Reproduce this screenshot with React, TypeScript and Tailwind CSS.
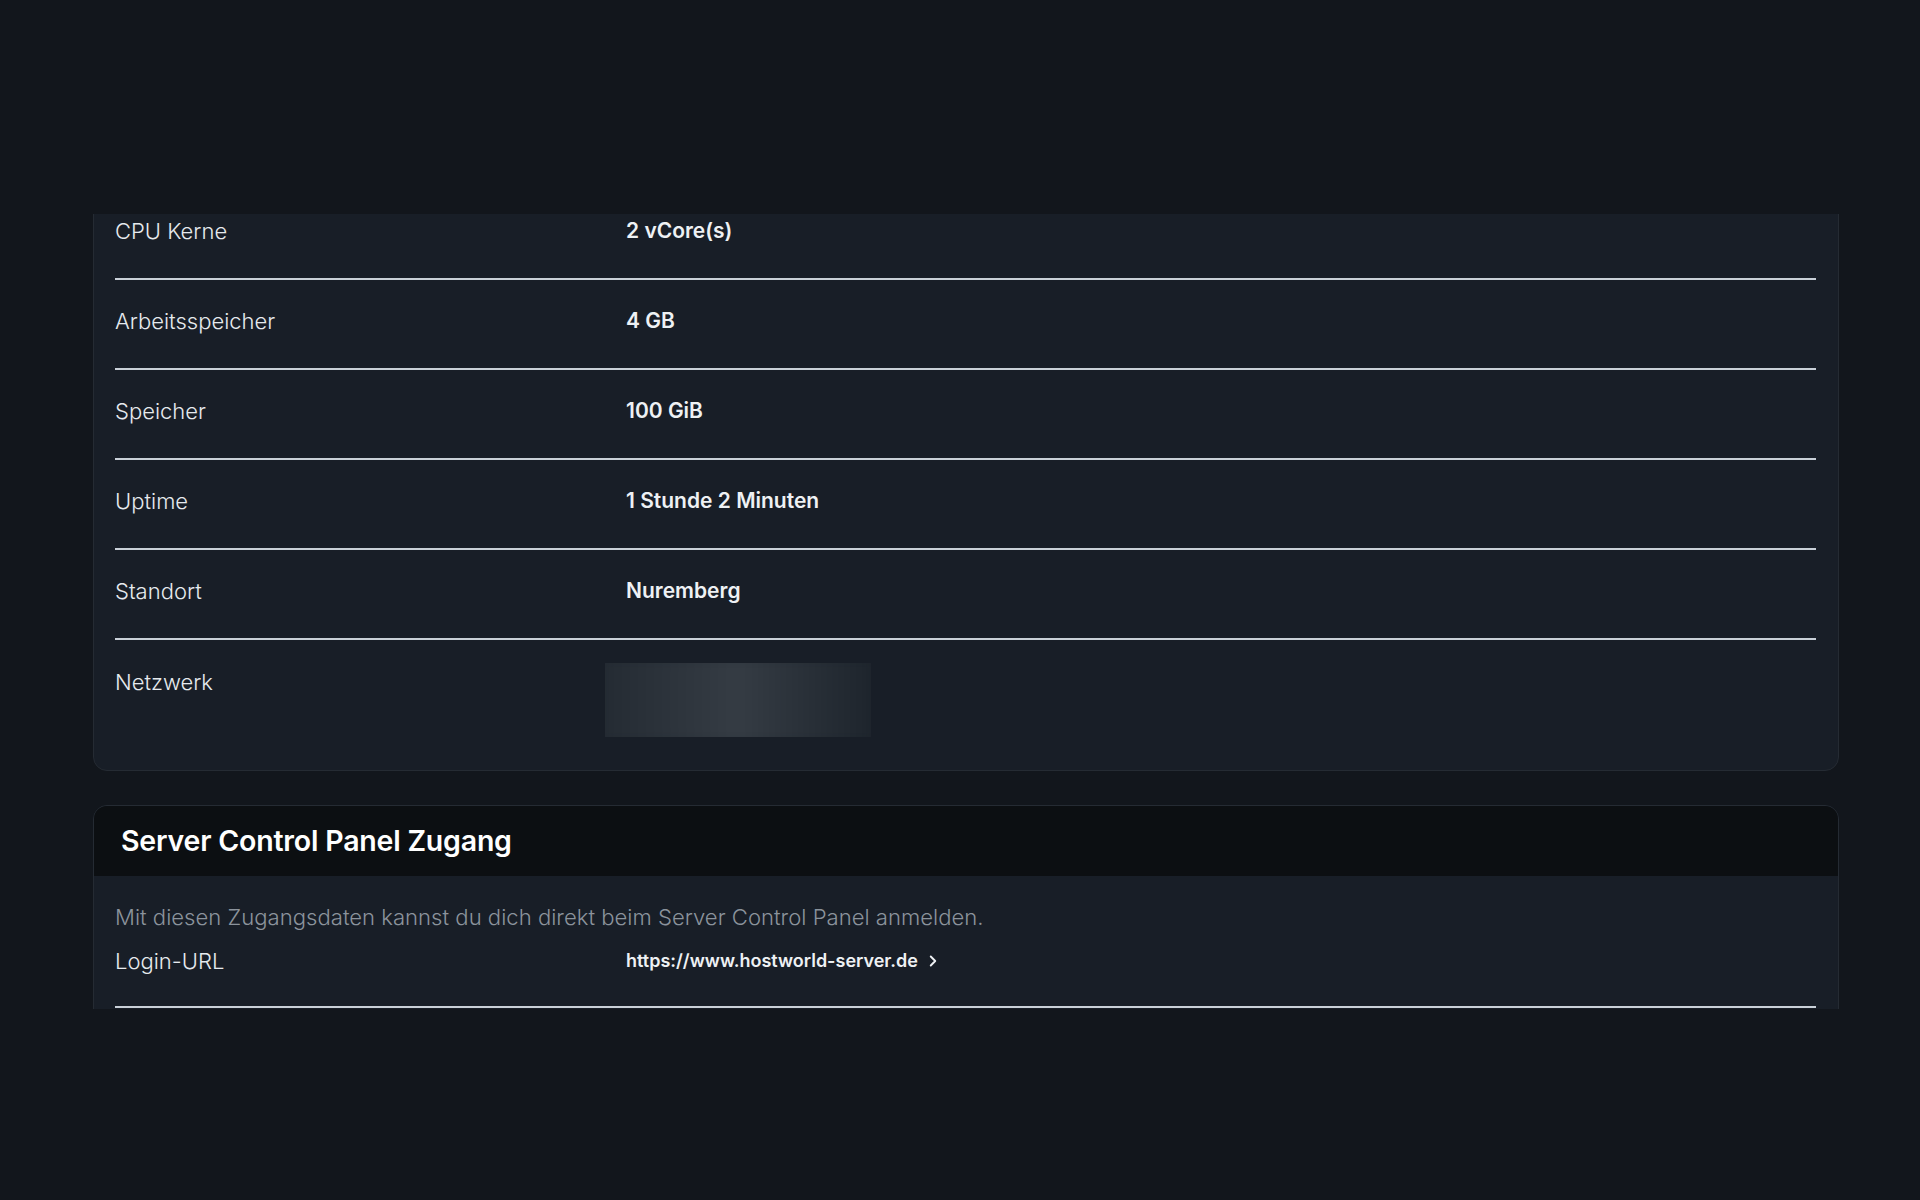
import { ChevronRight } from 'lucide-react'

const specs = [
  { label: 'CPU Kerne', value: '2 vCore(s)' },
  { label: 'Arbeitsspeicher', value: '4 GB' },
  { label: 'Speicher', value: '100 GiB' },
  { label: 'Uptime', value: '1 Stunde 2 Minuten' },
  { label: 'Standort', value: 'Nuremberg' },
]

const font = { fontFamily: 'Inter, "Noto Sans", sans-serif' }

function SpecRow({ label, value }: { label: string; value: string }) {
  return (
    <div className="border-b-2 border-[#c9d0d8]">
      <div className="flex items-center pt-[27px] pb-[33px] leading-[28px]">
        <div className="w-[511px] shrink-0 text-[22px] font-light text-[#e6eaee]">{label}</div>
        <div className="text-[21px] font-semibold text-[#eef1f4]">{value}</div>
      </div>
    </div>
  )
}

export default function App() {
  return (
    <div className="min-h-screen w-full bg-[#12161c]" style={font}>
      <div className="pt-[214px] pl-[93px] pr-[81px]">
        {/* scroll viewport, content is scrolled a bit down */}
        <div className="h-[795px] overflow-hidden">
          <div className="-mt-[25px] flex flex-col gap-[34px]">
            <section className="rounded-[14px] border border-[#252b33] bg-[#181e27] pl-[21px] pr-[22px] pb-[33px]">
              {specs.map((s) => (
                <SpecRow key={s.label} label={s.label} value={s.value} />
              ))}
              <div className="flex items-start pt-[23px] leading-[28px]">
                <div className="w-[490px] shrink-0 pt-[5px] text-[22px] font-light text-[#e6eaee]">Netzwerk</div>
                <div className="relative h-[74px] w-[266px] overflow-hidden">
                  <div className="absolute -inset-[12px] bg-gradient-to-r from-[#232a32] via-[#353c44] to-[#1c232b] blur-[8px]" />
                </div>
              </div>
            </section>

            <section className="overflow-hidden rounded-t-[14px] border border-[#252b33] bg-[#181e27]">
              <div className="flex h-[70px] items-center bg-[#0c0f12] px-[27px]">
                <h2 className="text-[28.5px] font-semibold tracking-[-0.2px] text-white">Server Control Panel Zugang</h2>
              </div>
              <div className="pl-[21px] pr-[22px]">
                <p className="pt-[27px] text-[22.1px] font-light leading-[28px] text-[#8b939c]">
                  Mit diesen Zugangsdaten kannst du dich direkt beim Server Control Panel anmelden.
                </p>
                <div className="flex items-center border-b-2 border-[#c9d0d8] pt-[16px] pb-[31px] leading-[28px]">
                  <div className="w-[511px] shrink-0 text-[22px] font-light text-[#e6eaee]">Login-URL</div>
                  <a className="flex items-center gap-[6px] text-[18px] font-semibold text-[#eef1f4]">
                    https://www.hostworld-server.de
                    <ChevronRight size={18} strokeWidth={2.5} />
                  </a>
                </div>
                <div className="h-[80px]" />
              </div>
            </section>
          </div>
        </div>
      </div>
    </div>
  )
}
